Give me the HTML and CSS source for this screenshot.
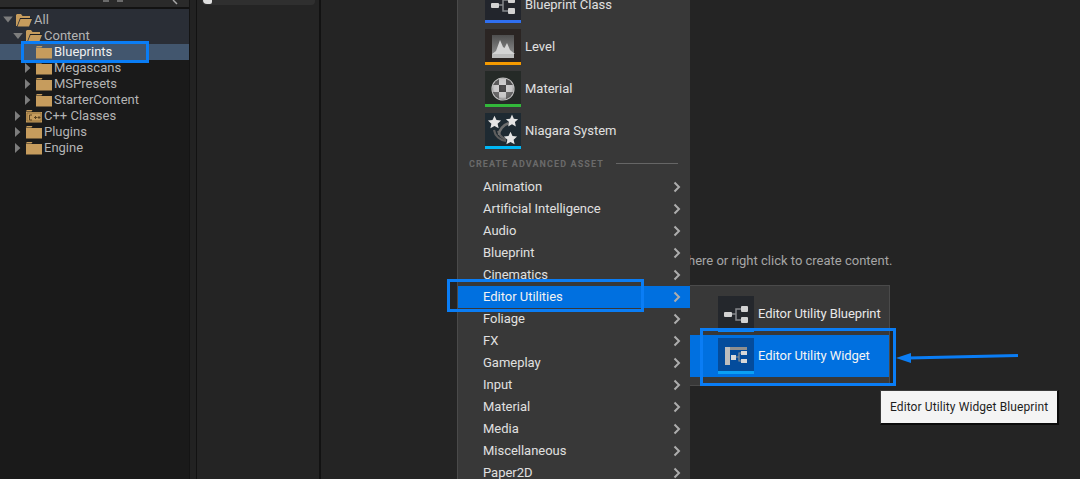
FILE: index.html
```html
<!DOCTYPE html>
<html lang="en">
<head>
<meta charset="utf-8">
<title>Content Browser</title>
<link rel="stylesheet" href="styles.css">
</head>
<body>
<svg class="defs" width="0" height="0" aria-hidden="true">
  <defs>
    <symbol id="folder" viewBox="0 0 16 14">
      <path d="M0 2.500h5.500l1-1.500H1L0 2Z" fill="#c69c5d"/>
      <path d="M0 3h16v10.500H0Z" fill="#c69c5d"/>
    </symbol>
    <symbol id="folder-open" viewBox="0 0 16 13">
      <path d="M0 12.500V1.500L1 .5h4l1.500 2H14v2H4L1.500 11 .9 12.500Z" fill="#c69c5d"/>
      <path d="M4.500 5.500H16l-3 7.500H1.500Z" fill="#c69c5d"/>
      <path d="M4 5h12" stroke="#1a1a1a" stroke-width=".8"/>
    </symbol>
    <symbol id="graph" viewBox="0 0 36 36">
      <path d="M13 18h5M18 18V13h5M18 18v6h5" fill="none" stroke="#85888c" stroke-width="1.500"/>
      <rect x="6" y="16" width="8" height="5" rx="1" fill="#d2d2d2"/>
      <rect x="23" y="10" width="7" height="6" rx="1" fill="#d2d2d2"/>
      <rect x="23" y="21" width="7" height="6" rx="1" fill="#d2d2d2"/>
    </symbol>
    <symbol id="widget" viewBox="0 0 36 36">
      <rect x="7" y="9" width="5" height="18" fill="#bdbdbd"/>
      <rect x="12" y="9" width="17" height="3" fill="#8f8f8f"/>
      <path d="M18 19h3M21 19v-4h2M21 19v4h2" fill="none" stroke="#8f8f8f" stroke-width="1.200"/>
      <rect x="13" y="17" width="5" height="5" fill="#d8d8d8"/>
      <rect x="23" y="13" width="6" height="4" fill="#d8d8d8"/>
      <rect x="23" y="21" width="6" height="4" fill="#d8d8d8"/>
    </symbol>
    <symbol id="star" viewBox="0 0 24 24">
      <path d="M12 1l3.200 7 7.300.8-5.500 5 1.600 7.500L12 17.500l-6.600 3.800L7 13.800l-5.500-5L8.800 8Z" fill="#e4e4e4"/>
    </symbol>
    <symbol id="chevron" viewBox="0 0 8 12">
      <path d="M1.500 1.500 6 6l-4.500 4.500" fill="none" stroke="#adadad" stroke-width="2"/>
    </symbol>
    <linearGradient id="level-sky" x1="0" y1="0" x2="0" y2="1">
      <stop offset="0" stop-color="#4e4e4e"/>
      <stop offset="1" stop-color="#8e8e8e"/>
    </linearGradient>
    <radialGradient id="ball-shade" cx=".5" cy=".45" r=".6">
      <stop offset="0" stop-color="#fff" stop-opacity=".15"/>
      <stop offset=".7" stop-color="#777" stop-opacity=".1"/>
      <stop offset="1" stop-color="#222" stop-opacity=".6"/>
    </radialGradient>
    <clipPath id="ball"><circle cx="18" cy="18" r="10.500"/></clipPath>
  </defs>
</svg>

<div class="app">
  <aside class="tree-panel">
    <div class="tree-top">
      <span class="top-dot"></span><span class="top-dot"></span>
      <svg class="top-search" width="8" height="6" viewBox="0 0 8 6"><path d="M1 0l4 4" stroke="#a8a8a8" stroke-width="1.500"/></svg>
    </div>
    <ul class="tree">
      <li class="row row-head lvl-0"><i class="tri tri-down"></i><svg class="fold"><use href="#folder-open"/></svg><span>All</span></li>
      <li class="row row-head lvl-1"><i class="tri tri-down"></i><svg class="fold"><use href="#folder-open"/></svg><span>Content</span></li>
      <li class="row row-sel lvl-2"><i class="tri"></i><svg class="fold"><use href="#folder"/></svg><span>Blueprints</span></li>
      <li class="row lvl-2"><i class="tri tri-right"></i><svg class="fold"><use href="#folder"/></svg><span>Megascans</span></li>
      <li class="row lvl-2"><i class="tri tri-right"></i><svg class="fold"><use href="#folder"/></svg><span>MSPresets</span></li>
      <li class="row lvl-2"><i class="tri tri-right"></i><svg class="fold"><use href="#folder"/></svg><span>StarterContent</span></li>
      <li class="row lvl-1"><i class="tri tri-right"></i><svg class="fold" viewBox="0 0 16 14"><use href="#folder" width="16" height="14"/><path d="M1 4h14v8H1Z" fill="none" stroke="#8a6a35" stroke-width=".8"/><path d="M6 6H3.500v5H6M8 8.500h3M9.500 7v3M11.500 8.500h3M13 7v3" fill="none" stroke="#5b4320" stroke-width="1"/></svg><span>C++ Classes</span></li>
      <li class="row lvl-1"><i class="tri tri-right"></i><svg class="fold"><use href="#folder"/></svg><span>Plugins</span></li>
      <li class="row lvl-1"><i class="tri tri-right"></i><svg class="fold"><use href="#folder"/></svg><span>Engine</span></li>
    </ul>
  </aside>
  <div class="gutter"></div>
  <section class="list-panel">
    <div class="list-search"><span class="list-knob"></span></div>
  </section>
  <main class="content">
    <p class="hint">here or right click to create content.</p>
  </main>
</div>

<nav class="menu">
  <div class="thumbs">
    <div class="thumb"><span class="tile tile-bp"><svg width="36" height="36"><use href="#graph"/></svg></span><span>Blueprint Class</span></div>
    <div class="thumb"><span class="tile tile-level"><svg width="36" height="36" viewBox="0 0 36 36"><rect x="7" y="6" width="22" height="20" fill="url(#level-sky)"/><path d="M7 25l4-3 4-11 3 7 1.500 1 2.500-5 3 7 5 4Z" fill="#d4d4d4"/><rect x="7" y="25" width="22" height="4" fill="#bcbcbc"/></svg></span><span>Level</span></div>
    <div class="thumb"><span class="tile tile-mat"><svg width="36" height="36" viewBox="0 0 36 36"><circle cx="18" cy="18" r="11" fill="#8a8a8a" stroke="#bdbdbd" stroke-width="1.200"/><g clip-path="url(#ball)" fill="#cfcfcf"><rect x="8" y="7" width="6" height="7" fill="#555"/><rect x="14" y="7" width="7" height="7"/><rect x="21" y="7" width="7" height="7" fill="#4a4a4a"/><rect x="8" y="14" width="6" height="7"/><rect x="14" y="14" width="7" height="7" fill="#333"/><rect x="21" y="14" width="7" height="7"/><rect x="8" y="21" width="6" height="7" fill="#666"/><rect x="14" y="21" width="7" height="7"/><rect x="21" y="21" width="7" height="7" fill="#666"/><circle cx="18" cy="18" r="10.500" fill="url(#ball-shade)"/></g></svg></span><span>Material</span></div>
    <div class="thumb"><span class="tile tile-nia"><svg width="36" height="36" viewBox="0 0 36 36"><path d="M9 17c1 6 6 10 12 11M13 18c1 4 4 7 8 8" fill="none" stroke="#5e5e5e" stroke-width="2.200"/><path d="M14 22c0-5 4-10 10-12" fill="none" stroke="#6e6e6e" stroke-width="2.500"/><use href="#star" x="2" y="2" width="15" height="15"/><use href="#star" x="20" y="1" width="14" height="14"/><use href="#star" x="18" y="18" width="15" height="15"/></svg></span><span>Niagara System</span></div>
  </div>
  <div class="section-label"><span>CREATE ADVANCED ASSET</span><i></i></div>
  <ul class="cats">
    <li class="cat"><span>Animation</span><svg class="chev"><use href="#chevron"/></svg></li>
    <li class="cat"><span>Artificial Intelligence</span><svg class="chev"><use href="#chevron"/></svg></li>
    <li class="cat"><span>Audio</span><svg class="chev"><use href="#chevron"/></svg></li>
    <li class="cat"><span>Blueprint</span><svg class="chev"><use href="#chevron"/></svg></li>
    <li class="cat"><span>Cinematics</span><svg class="chev"><use href="#chevron"/></svg></li>
    <li class="cat cat-on"><span>Editor Utilities</span><svg class="chev"><use href="#chevron"/></svg></li>
    <li class="cat"><span>Foliage</span><svg class="chev"><use href="#chevron"/></svg></li>
    <li class="cat"><span>FX</span><svg class="chev"><use href="#chevron"/></svg></li>
    <li class="cat"><span>Gameplay</span><svg class="chev"><use href="#chevron"/></svg></li>
    <li class="cat"><span>Input</span><svg class="chev"><use href="#chevron"/></svg></li>
    <li class="cat"><span>Material</span><svg class="chev"><use href="#chevron"/></svg></li>
    <li class="cat"><span>Media</span><svg class="chev"><use href="#chevron"/></svg></li>
    <li class="cat"><span>Miscellaneous</span><svg class="chev"><use href="#chevron"/></svg></li>
    <li class="cat"><span>Paper2D</span><svg class="chev"><use href="#chevron"/></svg></li>
  </ul>
</nav>

<div class="submenu">
  <div class="sub-item"><span class="tile tile-util"><svg width="36" height="36"><use href="#graph"/></svg></span><span>Editor Utility Blueprint</span></div>
  <div class="sub-item sub-on"><span class="tile tile-widget"><svg width="36" height="36"><use href="#widget"/></svg></span><span>Editor Utility Widget</span></div>
</div>

<div class="mark mark-tree"></div>
<div class="mark mark-cat"></div>
<div class="mark mark-widget"></div>
<svg class="arrow" width="124" height="12" viewBox="0 0 124 12"><path d="M122 3.500 12 6" stroke="#0a7df5" stroke-width="2.800" fill="none"/><path d="M0 6 15 1v10Z" fill="#0a7df5"/></svg>
<div class="tooltip">Editor Utility Widget Blueprint</div>
</body>
</html>
```

FILE: styles.css
```css
* { box-sizing: border-box; }
html, body { margin: 0; padding: 0; height: 100%; overflow: hidden; }
body {
  position: relative;
  background: #242424;
  font-family: Roboto, "Liberation Sans", sans-serif;
  font-size: 13px;
  color: #c8c8c8;
}
ul { list-style: none; margin: 0; padding: 0; }
.defs { position: absolute; }

.app { display: flex; height: 479px; }

.tree-panel { width: 190px; flex: none; background: #1a1a1a; border-right: 1px solid #141414; display: flex; flex-direction: column; }
.tree-top { height: 9px; flex: none; background: #2a2a2a; border-bottom: 2px solid #121212; position: relative; display: flex; gap: 8px; padding-left: 103px; }
.top-dot { width: 6px; height: 2px; background: #6b6b6b; }
.top-search { position: absolute; left: 172px; top: 0; }
.row { height: 16px; display: flex; align-items: center; line-height: 16px; white-space: nowrap; color: #b4b4b4; }
.row-head { background: #2a2e36; }
.row-sel { background: #42566e; color: #f0f0f0; }
.lvl-0 { padding-left: 2px; height: 19px; padding-top: 2px; }
.lvl-1 { padding-left: 12px; }
.lvl-2 { padding-left: 22px; }
.tri { width: 12px; height: 10px; flex: none; margin-right: 2px; display: block; }
.tri-down { background: #7d7d7d; clip-path: polygon(10% 20%, 90% 20%, 50% 80%); }
.tri-right { background: #7d7d7d; clip-path: polygon(25% 0, 70% 50%, 25% 100%); }
.fold { width: 16px; height: 14px; flex: none; margin-right: 2px; }

.gutter { width: 7px; flex: none; background: #222; border-right: 1px solid #121212; }
.list-panel { width: 124px; flex: none; background: #242424; border-right: 2px solid #121212; padding: 0 4px 0 5px; }
.list-search { height: 5px; background: #2f2f2f; border-radius: 0 0 4px 4px; overflow: hidden; }
.list-knob { display: block; width: 9px; height: 4px; background: #dedede; border-radius: 0 0 2px 4px; margin-left: 1px; }

.content { flex: 1; padding: 253px 0 0 367px; }
.hint { margin: 0; line-height: 16px; color: #a6a6a6; white-space: nowrap; }

.menu { position: absolute; left: 457px; top: 0; width: 233px; height: 479px; overflow: hidden; background: #383838; border-left: 1px solid #4a4a4a; color: #e0e0e0; }
.thumbs { margin-top: -13px; padding-left: 27px; display: flex; flex-direction: column; gap: 6px; }
.thumb { display: flex; align-items: center; height: 36px; gap: 4px; line-height: 16px; }
.tile { width: 36px; height: 36px; flex: none; display: block; border-bottom: 3px solid #000; overflow: hidden; }
.tile svg { display: block; }
.tile-bp { background: #22252c; border-color: #2f6ff0; }
.tile-level { background: #2b2523; border-color: #f59a00; }
.tile-mat { background: #252a27; border-color: #32b83a; }
.tile-nia { background: #1e2a32; border-color: #00b7f5; }
.tile-util { background: #24272c; border-color: #0a84f5; }
.tile-widget { background: #044c9c; border-color: #0aa0f5; }

.section-label { height: 27px; display: flex; align-items: center; padding: 2px 12px 0 11px; font-size: 9px; font-weight: 700; letter-spacing: 1.100px; color: #6a6a6a; }
.section-label i { flex: 1; height: 1px; background: #666; margin-left: 12px; }

.cat { height: 22px; display: flex; align-items: center; justify-content: space-between; padding: 0 9px 0 25px; line-height: 22px; letter-spacing: -.02px; }
.cat-on { background: #0070e0; color: #f2f2f2; }
.chev { width: 8px; height: 12px; flex: none; }

.submenu { position: absolute; left: 690px; top: 285px; width: 200px; height: 101px; background: #383838; border: 1px solid #4a4a4a; border-left: 0; padding-top: 10px; color: #e8e8e8; letter-spacing: -.07px; }
.sub-item { display: flex; align-items: center; gap: 4px; height: 36px; padding-left: 28px; line-height: 16px; }
.sub-on { background: #0070e0; height: 42px; color: #f4f4f4; margin-top: 3px; }

.mark { position: absolute; border: 3px solid #0a7df5; }
.mark-tree { left: 21px; top: 41px; width: 128px; height: 22px; }
.mark-cat { left: 447px; top: 279px; width: 197px; height: 33px; }
.mark-widget { left: 700px; top: 328px; width: 196px; height: 58px; }
.arrow { position: absolute; left: 896px; top: 352px; }

.tooltip { position: absolute; left: 880px; top: 390px; width: 179px; height: 35px; background: #f4f4f4; border: 1px solid #3a3a3a; border-right: 2px solid #0c0c0c; border-bottom: 2px solid #0c0c0c; color: #1e1e1e; font-size: 12px; line-height: 32px; padding-left: 9px; white-space: nowrap; letter-spacing: .1px; }
```
